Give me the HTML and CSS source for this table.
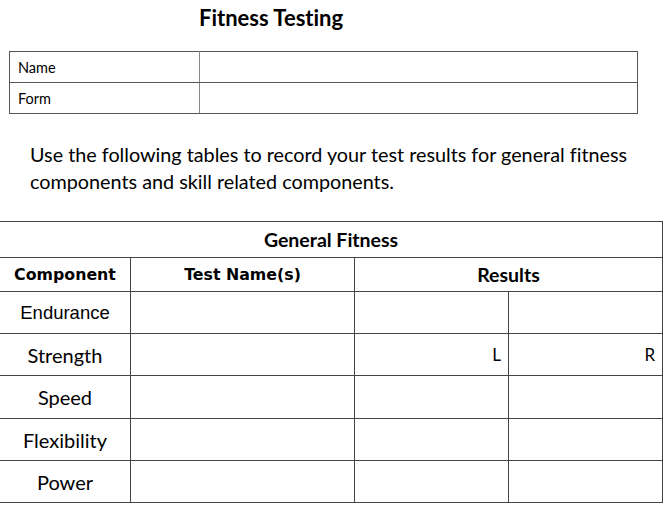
FILE: index.html
```html
<!DOCTYPE html>
<html>
<head>
<meta charset="utf-8">
<link rel="stylesheet" href="styles.css">
</head>
<body>
<h1 class="title">Fitness Testing</h1>
<table class="info">
  <tr><td class="label">Name</td><td></td></tr>
  <tr><td class="label">Form</td><td></td></tr>
</table>
<p class="intro">Use the following tables to record your test results for general fitness components and skill related components.</p>
<table class="fit">
  <colgroup>
    <col class="c1"><col class="c2"><col class="c3"><col class="c4">
  </colgroup>
  <tr class="cap"><th colspan="4">General Fitness</th></tr>
  <tr class="head">
    <th class="tah">Component</th>
    <th class="tah">Test Name(s)</th>
    <th colspan="2" class="res">Results</th>
  </tr>
  <tr class="row"><td class="arial">Endurance</td><td></td><td></td><td class="light-l"></td></tr>
  <tr class="row"><td>Strength</td><td></td><td class="lr">L</td><td class="lr light-l">R</td></tr>
  <tr class="row tall"><td>Speed</td><td></td><td></td><td class="light-l"></td></tr>
  <tr class="row light-t"><td>Flexibility</td><td></td><td></td><td class="light-l"></td></tr>
  <tr class="row"><td>Power</td><td></td><td></td><td class="light-l"></td></tr>
</table>
</body>
</html>
```
FILE: styles.css
```css
html, body {
  margin: 0;
  padding: 0;
  background: #fff;
  color: #000;
  font-family: Lato, "Open Sans", sans-serif;
  font-variant-ligatures: none;
}
.title {
  margin: 5px 0 0 0;
  padding-left: 199px;
  font-size: 22px;
  font-weight: 700;
  line-height: 26px;
  height: 26px;
}
.info {
  margin: 20px 0 0 9px;
  width: 629px;
  border-collapse: collapse;
}
.info td {
  border: 1px solid #555;
  height: 30px;
  padding: 0 0 0 8px;
  font-size: 14.5px;
  vertical-align: middle;
}
.info td.label {
  width: 181px;
  border-right-color: #888;
}
.intro {
  margin: 27px 0 0 30px;
  width: 630px;
  font-size: 19.8px;
  line-height: 27px;
}
.fit {
  margin: 26px 0 0 -1px;
  width: 663px;
  border-collapse: collapse;
  table-layout: fixed;
}
.fit col.c1 { width: 131px; }
.fit col.c2 { width: 224px; }
.fit col.c3 { width: 154px; }
.fit col.c4 { width: 154px; }
.fit th, .fit td {
  border: 1px solid #444;
  padding: 0;
  text-align: center;
  vertical-align: middle;
}
.fit .cap th {
  height: 35px;
  font-size: 19.5px;
  font-weight: 700;
}
.fit .head th {
  height: 33px;
  font-size: 19.5px;
  font-weight: 700;
}
.fit th.tah {
  font-family: "DejaVu Sans", sans-serif;
  font-size: 15.8px;
}
.fit .row td {
  height: 41px;
  font-size: 20px;
}
.fit .row.tall td {
  height: 42px;
}
.fit td.arial {
  font-family: "Liberation Sans", Arial, sans-serif;
  font-size: 18.5px;
}
.fit td.lr {
  text-align: right;
  padding-right: 7px;
  font-size: 17px;
}
.fit td.light-l {
  border-left-color: #888;
}
.fit tr.light-t td {
  border-top-color: #999;
}
```
